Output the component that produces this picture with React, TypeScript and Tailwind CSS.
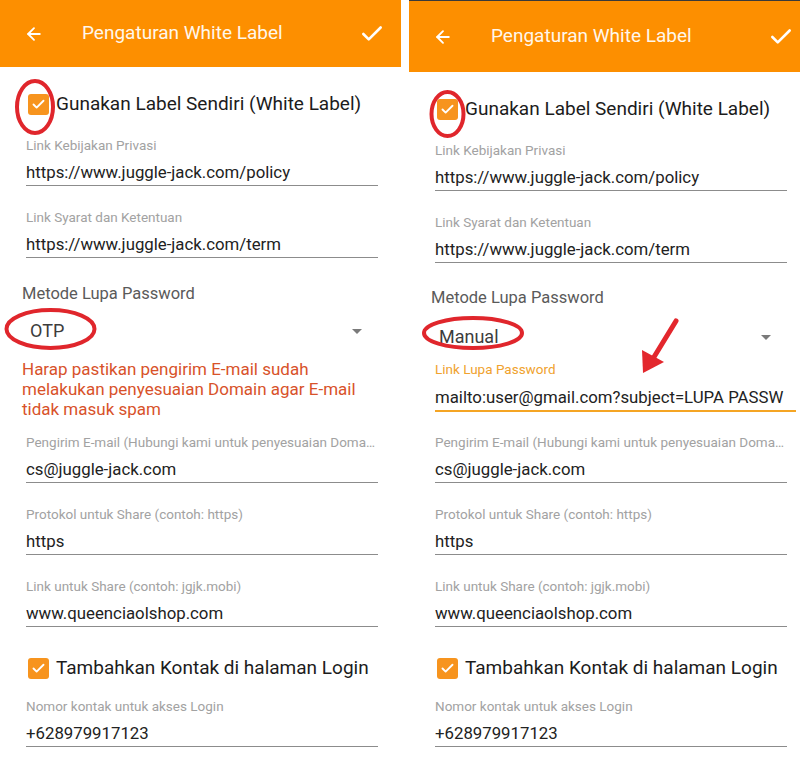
import { ArrowLeft, Check } from "lucide-react";

type Mode = "otp" | "manual";

function OrangeCheck() {
  return (
    <div className="w-[21px] h-[21px] rounded-[3px] bg-[#f7941e] flex items-center justify-center shrink-0">
      <Check className="w-[15px] h-[15px] text-white" strokeWidth={3} />
    </div>
  );
}

function Field({ label, value, mt = "mt-[23px]" }: { label: string; value: string; mt?: string }) {
  return (
    <div className={`${mt} pl-[26px] pr-[23px]`}>
      <div className="h-4 text-[13.5px] leading-4 text-[#a2a2a2] whitespace-nowrap overflow-hidden text-ellipsis">
        {label}
      </div>
      <div className="mt-[9px] h-6 text-[16.8px] leading-5 text-[#222] border-b border-[#8c8c8c] whitespace-nowrap overflow-hidden">
        {value}
      </div>
    </div>
  );
}

function Panel({ mode }: { mode: Mode }) {
  const manual = mode === "manual";
  return (
    <div className="relative w-[401px] shrink-0 bg-white">
      {/* Toolbar */}
      <div
        className={`${manual ? "h-[72px] border-t border-[#3a3a3a]" : "h-[67px]"} bg-[#fd8f00] flex items-center px-6`}
      >
        <ArrowLeft className="w-5 h-5 text-white" strokeWidth={2.2} />
        <span className="ml-[38px] text-[19px] text-[#fff7ec]">Pengaturan White Label</span>
        <Check className="ml-auto -mr-[8px] w-[26px] h-[26px] text-white" strokeWidth={2.4} />
      </div>

      {/* White label toggle */}
      <div className="mt-[25px] h-6 pl-[28px] flex items-center gap-[7px]">
        <OrangeCheck />
        <span className="text-[19px] text-[#1c1c1c] whitespace-nowrap">Gunakan Label Sendiri (White Label)</span>
      </div>

      <Field mt="mt-[21px]" label="Link Kebijakan Privasi" value="https://www.juggle-jack.com/policy" />
      <Field label="Link Syarat dan Ketentuan" value="https://www.juggle-jack.com/term" />

      {/* Forgot password method */}
      <div className={`${manual ? "mt-[25px]" : "mt-[26px]"} pl-[22px] h-5 text-[16.5px] leading-5 text-[#5a5a5a]`}>
        Metode Lupa Password
      </div>
      <div className={`${manual ? "mt-[19px]" : "mt-[17px]"} h-5 pl-[30px] pr-[39px] flex items-center justify-between`}>
        <span className="text-lg leading-5 text-[#3c3c3c]">{manual ? "Manual" : "OTP"}</span>
        <span className="w-0 h-0 border-l-[5px] border-r-[5px] border-t-[5px] border-l-transparent border-r-transparent border-t-[#7a7a7a]" />
      </div>

      {manual ? (
        <div className="mt-[14px] pl-[26px] pr-[14px]">
          <div className="h-4 text-[13.5px] leading-4 text-[#f0a22e]">Link Lupa Password</div>
          <div className="mt-[10px] h-[25px] text-[16.8px] leading-5 text-[#222] border-b-2 border-[#f5a524] whitespace-nowrap overflow-hidden">
            mailto:user@gmail.com?subject=LUPA PASSW
          </div>
        </div>
      ) : (
        <div className="mt-[18px] pl-[22px] pr-4 text-[17px] leading-5 text-[#d8522a] whitespace-nowrap">
          Harap pastikan pengirim E-mail sudah
          <br />
          melakukan penyesuaian Domain agar E-mail
          <br />
          tidak masuk spam
        </div>
      )}

      <Field
        mt={manual ? "mt-[22px]" : "mt-[15px]"}
        label="Pengirim E-mail (Hubungi kami untuk penyesuaian Domain)"
        value="cs@juggle-jack.com"
      />
      <Field label="Protokol untuk Share (contoh: https)" value="https" />
      <Field label="Link untuk Share (contoh: jgjk.mobi)" value="www.queenciaolshop.com" />

      {/* Login contact toggle */}
      <div className="mt-[29px] h-6 pl-[28px] flex items-center gap-[7px]">
        <OrangeCheck />
        <span className="text-[19px] text-[#1c1c1c] whitespace-nowrap">Tambahkan Kontak di halaman Login</span>
      </div>
      <Field mt="mt-[18px]" label="Nomor kontak untuk akses Login" value="+628979917123" />

      {/* Red annotations */}
      <svg className="absolute inset-0 pointer-events-none" width="401" height="773">
        {manual ? (
          <>
            <ellipse cx="38.5" cy="114" rx="16" ry="22" fill="none" stroke="#e0262c" strokeWidth="4" />
            <ellipse cx="64" cy="333" rx="49" ry="15" fill="none" stroke="#e0262c" strokeWidth="4" />
            <line x1="267" y1="321" x2="245" y2="357" stroke="#e3272d" strokeWidth="5" strokeLinecap="round" />
            <polygon points="234,373 233,350 255,362" fill="#e3272d" />
          </>
        ) : (
          <>
            <ellipse cx="35" cy="107" rx="18" ry="26" fill="none" stroke="#e0262c" strokeWidth="4" />
            <ellipse cx="50.5" cy="329" rx="44" ry="19" fill="none" stroke="#e0262c" strokeWidth="4" />
          </>
        )}
      </svg>
    </div>
  );
}

export default function App() {
  return (
    <div className="w-[800px] h-[773px] bg-white flex gap-2 overflow-hidden font-['Roboto',sans-serif]">
      <Panel mode="otp" />
      <div className="w-[391px] overflow-hidden">
        <Panel mode="manual" />
      </div>
    </div>
  );
}
